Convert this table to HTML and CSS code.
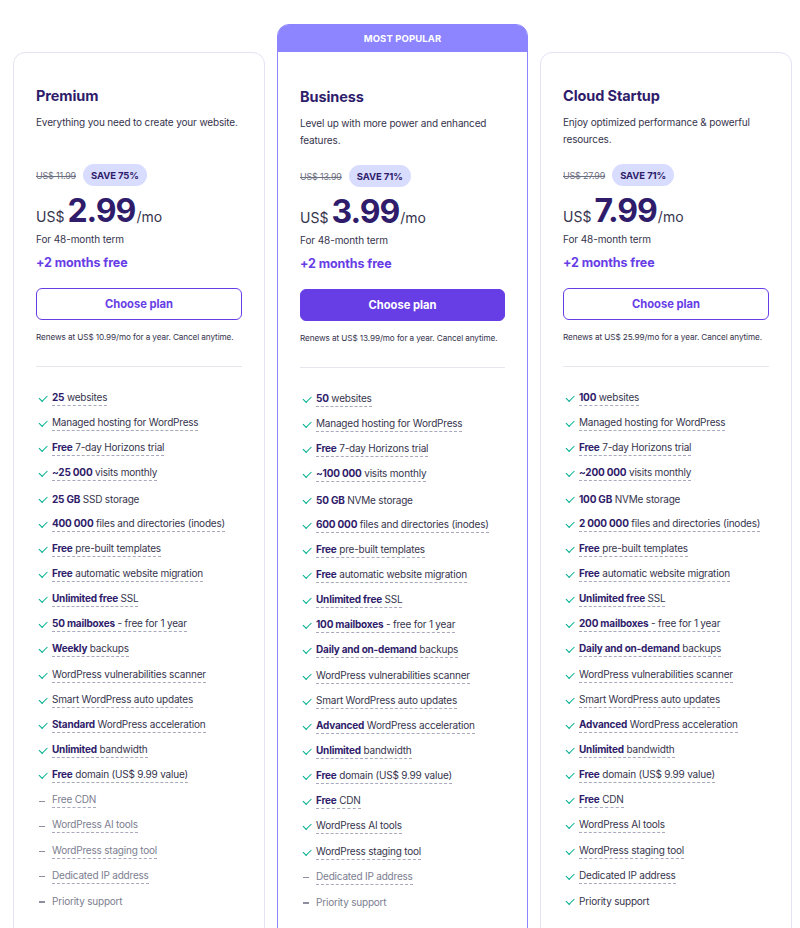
FILE: index.html
```html
<!DOCTYPE html>
<html lang="en">
<head>
<meta charset="utf-8">
<title>Hosting plans</title>
<link rel="stylesheet" href="styles.css">
</head>
<body>
<div class="plans">
  <section class="card">
    <div class="card-body">
      <h2 class="title">Premium</h2>
      <p class="desc">Everything you need to create your website.</p>
      <div class="old-row"><s class="old">US$ 11.99</s><span class="badge">SAVE 75%</span></div>
      <div class="price"><span class="cur">US$</span><span class="amt">2.99</span><span class="per">/mo</span></div>
      <div class="term">For 48-month term</div>
      <div class="bonus">+2 months free</div>
      <button class="btn">Choose plan</button>
      <p class="renew">Renews at US$ 10.99/mo for a year. Cancel anytime.</p>
      <hr class="divider">
      <ul class="features">
        <li class="on"><span class="u"><b>25</b> websites</span></li>
        <li class="on"><span class="u">Managed hosting for WordPress</span></li>
        <li class="on"><span class="u"><b>Free</b> 7-day Horizons trial</span></li>
        <li class="on"><span class="u"><b>~25 000</b> visits monthly</span></li>
        <li class="on"><span><b>25 GB</b> SSD storage</span></li>
        <li class="on"><span class="u"><b>400 000</b> files and directories (inodes)</span></li>
        <li class="on"><span class="u"><b>Free</b> pre-built templates</span></li>
        <li class="on"><span class="u"><b>Free</b> automatic website migration</span></li>
        <li class="on"><span class="u"><b>Unlimited free</b> SSL</span></li>
        <li class="on"><span class="u"><b>50 mailboxes</b> - free for 1 year</span></li>
        <li class="on"><span class="u"><b>Weekly</b> backups</span></li>
        <li class="on"><span class="u">WordPress vulnerabilities scanner</span></li>
        <li class="on"><span class="u">Smart WordPress auto updates</span></li>
        <li class="on"><span class="u"><b>Standard</b> WordPress acceleration</span></li>
        <li class="on"><span class="u"><b>Unlimited</b> bandwidth</span></li>
        <li class="on"><span class="u"><b>Free</b> domain (US$ 9.99 value)</span></li>
        <li class="off"><span class="u">Free CDN</span></li>
        <li class="off"><span class="u">WordPress AI tools</span></li>
        <li class="off"><span class="u">WordPress staging tool</span></li>
        <li class="off"><span class="u">Dedicated IP address</span></li>
        <li class="off"><span>Priority support</span></li>
      </ul>
    </div>
  </section>

  <section class="card card-popular">
    <div class="popular-head">MOST POPULAR</div>
    <div class="card-body">
      <h2 class="title">Business</h2>
      <p class="desc">Level up with more power and enhanced features.</p>
      <div class="old-row"><s class="old">US$ 13.99</s><span class="badge">SAVE 71%</span></div>
      <div class="price"><span class="cur">US$</span><span class="amt">3.99</span><span class="per">/mo</span></div>
      <div class="term">For 48-month term</div>
      <div class="bonus">+2 months free</div>
      <button class="btn btn-primary">Choose plan</button>
      <p class="renew">Renews at US$ 13.99/mo for a year. Cancel anytime.</p>
      <hr class="divider">
      <ul class="features">
        <li class="on"><span class="u"><b>50</b> websites</span></li>
        <li class="on"><span class="u">Managed hosting for WordPress</span></li>
        <li class="on"><span class="u"><b>Free</b> 7-day Horizons trial</span></li>
        <li class="on"><span class="u"><b>~100 000</b> visits monthly</span></li>
        <li class="on"><span><b>50 GB</b> NVMe storage</span></li>
        <li class="on"><span class="u"><b>600 000</b> files and directories (inodes)</span></li>
        <li class="on"><span class="u"><b>Free</b> pre-built templates</span></li>
        <li class="on"><span class="u"><b>Free</b> automatic website migration</span></li>
        <li class="on"><span class="u"><b>Unlimited free</b> SSL</span></li>
        <li class="on"><span class="u"><b>100 mailboxes</b> - free for 1 year</span></li>
        <li class="on"><span class="u"><b>Daily and on-demand</b> backups</span></li>
        <li class="on"><span class="u">WordPress vulnerabilities scanner</span></li>
        <li class="on"><span class="u">Smart WordPress auto updates</span></li>
        <li class="on"><span class="u"><b>Advanced</b> WordPress acceleration</span></li>
        <li class="on"><span class="u"><b>Unlimited</b> bandwidth</span></li>
        <li class="on"><span class="u"><b>Free</b> domain (US$ 9.99 value)</span></li>
        <li class="on"><span class="u"><b>Free</b> CDN</span></li>
        <li class="on"><span class="u">WordPress AI tools</span></li>
        <li class="on"><span class="u">WordPress staging tool</span></li>
        <li class="off"><span class="u">Dedicated IP address</span></li>
        <li class="off"><span>Priority support</span></li>
      </ul>
    </div>
  </section>

  <section class="card">
    <div class="card-body">
      <h2 class="title">Cloud Startup</h2>
      <p class="desc">Enjoy optimized performance &amp; powerful resources.</p>
      <div class="old-row"><s class="old">US$ 27.99</s><span class="badge">SAVE 71%</span></div>
      <div class="price"><span class="cur">US$</span><span class="amt">7.99</span><span class="per">/mo</span></div>
      <div class="term">For 48-month term</div>
      <div class="bonus">+2 months free</div>
      <button class="btn">Choose plan</button>
      <p class="renew">Renews at US$ 25.99/mo for a year. Cancel anytime.</p>
      <hr class="divider">
      <ul class="features">
        <li class="on"><span class="u"><b>100</b> websites</span></li>
        <li class="on"><span class="u">Managed hosting for WordPress</span></li>
        <li class="on"><span class="u"><b>Free</b> 7-day Horizons trial</span></li>
        <li class="on"><span class="u"><b>~200 000</b> visits monthly</span></li>
        <li class="on"><span><b>100 GB</b> NVMe storage</span></li>
        <li class="on"><span class="u"><b>2 000 000</b> files and directories (inodes)</span></li>
        <li class="on"><span class="u"><b>Free</b> pre-built templates</span></li>
        <li class="on"><span class="u"><b>Free</b> automatic website migration</span></li>
        <li class="on"><span class="u"><b>Unlimited free</b> SSL</span></li>
        <li class="on"><span class="u"><b>200 mailboxes</b> - free for 1 year</span></li>
        <li class="on"><span class="u"><b>Daily and on-demand</b> backups</span></li>
        <li class="on"><span class="u">WordPress vulnerabilities scanner</span></li>
        <li class="on"><span class="u">Smart WordPress auto updates</span></li>
        <li class="on"><span class="u"><b>Advanced</b> WordPress acceleration</span></li>
        <li class="on"><span class="u"><b>Unlimited</b> bandwidth</span></li>
        <li class="on"><span class="u"><b>Free</b> domain (US$ 9.99 value)</span></li>
        <li class="on"><span class="u"><b>Free</b> CDN</span></li>
        <li class="on"><span class="u">WordPress AI tools</span></li>
        <li class="on"><span class="u">WordPress staging tool</span></li>
        <li class="on"><span class="u">Dedicated IP address</span></li>
        <li class="on"><span>Priority support</span></li>
      </ul>
    </div>
  </section>
</div>
</body>
</html>
```

FILE: styles.css
```css
* { box-sizing: border-box; }

body {
  margin: 0;
  background: #ffffff;
  font-family: Inter, "Noto Sans", sans-serif;
  color: #2f1c6a;
  overflow: hidden;
}

.plans {
  display: flex;
  align-items: flex-start;
  gap: 12px;
  padding: 24px 0 0 13px;
}

.card {
  width: 252px;
  margin-top: 28px;
  border: 1px solid #e3e3f4;
  border-radius: 12px;
  background: #fff;
  min-height: 920px;
}

.card-popular {
  margin-top: 0;
  width: 251px;
  border: 1.5px solid #8c85ff;
  min-height: 960px;
}

.popular-head {
  height: 27px;
  background: #8c85ff;
  color: #fff;
  font-size: 9.5px;
  font-weight: 700;
  letter-spacing: 0.1px;
  display: flex;
  align-items: center;
  justify-content: center;
  border-radius: 10px 10px 0 0;
}

.card-body {
  padding: 33px 22px 0;
}

.card-popular .card-body {
  padding-top: 35px;
}

.title {
  margin: 0;
  font-size: 14.5px;
  line-height: 20px;
  font-weight: 700;
  letter-spacing: -0.1px;
  color: #2f1c6a;
}

.desc {
  margin: 8px 0 0;
  font-size: 10px;
  line-height: 17px;
  letter-spacing: -0.15px;
  min-height: 34px;
  color: #36344d;
}

.old-row {
  margin-top: 16px;
  display: flex;
  align-items: center;
  gap: 7px;
  height: 22px;
}

.old {
  font-size: 9px;
  letter-spacing: -0.2px;
  color: #6d7081;
}

.badge {
  background: #d8dcff;
  border-radius: 11px;
  height: 22px;
  padding: 0 8px;
  display: inline-flex;
  align-items: center;
  font-size: 9.5px;
  font-weight: 700;
  letter-spacing: -0.1px;
  color: #2f1c6a;
}

.price {
  margin-top: 5px;
  display: flex;
  align-items: baseline;
  height: 40px;
  color: #2f1c6a;
}

.cur {
  font-size: 14px;
  color: #36344d;
  margin-right: 3px;
}

.amt {
  font-size: 32px;
  font-weight: 700;
  letter-spacing: -1px;
  line-height: 40px;
}

.per {
  font-size: 14px;
  color: #36344d;
  margin-left: 1px;
}

.term {
  margin-top: 0;
  font-size: 10px;
  line-height: 16px;
  letter-spacing: -0.1px;
  color: #36344d;
}

.bonus {
  margin-top: 7px;
  font-size: 12.5px;
  line-height: 18px;
  font-weight: 700;
  letter-spacing: -0.1px;
  color: #673de6;
}

.btn {
  display: block;
  width: 100%;
  height: 32px;
  margin-top: 16px;
  border: 1.5px solid #673de6;
  border-radius: 6px;
  background: #fff;
  color: #673de6;
  font-family: inherit;
  font-size: 11.2px;
  font-weight: 700;
}

.btn-primary {
  background: #673de6;
  color: #fff;
}

.renew {
  margin: 10px 0 0;
  font-size: 8.2px;
  line-height: 14px;
  letter-spacing: -0.1px;
  white-space: nowrap;
  color: #36344d;
}

.divider {
  margin: 22px 0 0;
  border: 0;
  border-top: 1px solid #e6e6ee;
}

.features {
  list-style: none;
  margin: 19px 0 0;
  padding: 0;
}

.features li {
  height: 25.15px;
  display: flex;
  align-items: center;
  font-size: 10px;
  letter-spacing: -0.2px;
  white-space: nowrap;
  color: #36344d;
  padding-left: 16px;
  position: relative;
}

.features li::before {
  content: "";
  position: absolute;
  left: 3px;
  top: 50%;
}

.features li.on::before {
  width: 7px;
  height: 3.5px;
  margin-top: -3.5px;
  border-left: 1.3px solid #00b090;
  border-bottom: 1.3px solid #00b090;
  transform: rotate(-45deg);
}

.features li.off::before {
  left: 3px;
  width: 6px;
  height: 1.2px;
  background: #8d8fa0;
}

.features li.off {
  color: #7c7e90;
}

.features b {
  font-weight: 700;
  color: #2f1c6a;
}

.features li.off b { color: inherit; }

.u {
  border-bottom: 1px dashed #a8a9bc;
  padding-bottom: 1px;
  line-height: 13px;
}
```
